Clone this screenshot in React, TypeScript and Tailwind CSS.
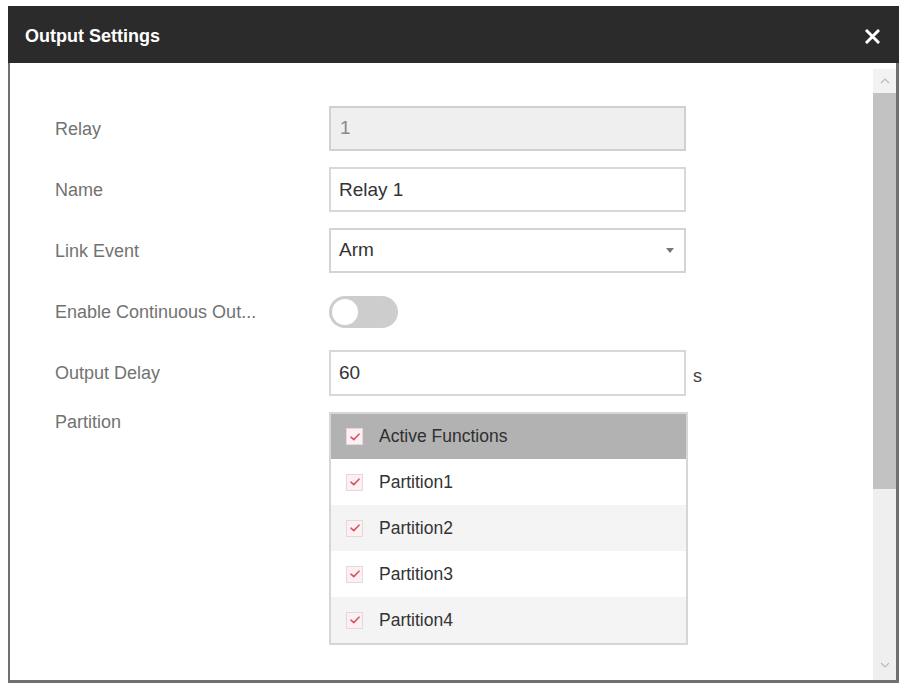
import React, { useState } from 'react';

// Output Settings dialog — relay config with partition list

const PARTITIONS = ['Partition1', 'Partition2', 'Partition3', 'Partition4'];

function Check() {
  return (
    <span className="w-[17px] h-[17px] border border-[#e6d8da] bg-[#fcf0f2] flex items-center justify-center shrink-0">
      <svg width="10" height="8" viewBox="0 0 10 8" fill="none">
        <path d="M1 4.2 L3.8 6.6 L9 1.2" stroke="#d9546a" strokeWidth="1.6" strokeLinecap="round" strokeLinejoin="round" />
      </svg>
    </span>
  );
}

function Row({ label, children, top }: { label: string; children: React.ReactNode; top?: boolean }) {
  return (
    <div className={`flex ${top ? 'items-start' : 'items-center min-h-[45px]'}`}>
      <div className="w-[274px] shrink-0 text-[18px] text-[#727272] leading-[20px]">{label}</div>
      {children}
    </div>
  );
}

export default function App() {
  const [on, setOn] = useState(false);
  const [name, setName] = useState('Relay 1');
  const [delay, setDelay] = useState('60');

  return (
    <div className="min-h-screen bg-white font-['Liberation_Sans',Arial,sans-serif]">
      <div className="ml-[8px] pt-[6px] w-[891px] flex flex-col">
        {/* Header */}
        <div className="h-[57px] bg-[#2b2b2b] flex items-center justify-between pl-[17px] pr-[19px] pt-[3px]">
          <span className="text-white font-bold text-[18px]">Output Settings</span>
          <svg width="15" height="15" viewBox="0 0 15 15">
            <path d="M2 2 L13 13 M13 2 L2 13" stroke="#fff" strokeWidth="3" strokeLinecap="square" />
          </svg>
        </div>

        {/* Body */}
        <div className="h-[620px] flex border-l-2 border-r-[3px] border-b-[3px] border-[#707070] bg-white">
          <div className="flex-1 pl-[45px] pt-[43px] flex flex-col gap-[16px]">
            <Row label="Relay">
              <div className="w-[357px] h-[45px] border-2 border-[#d0d0d0] bg-[#efefef] flex items-center px-[9px] text-[19px] text-[#8a8a8a]">1</div>
            </Row>
            <Row label="Name">
              <input
                value={name}
                onChange={e => setName(e.target.value)}
                className="w-[357px] h-[45px] border-2 border-[#d8d8d8] bg-white px-[8px] text-[19px] text-[#333] outline-none"
              />
            </Row>
            <Row label="Link Event">
              <div className="w-[357px] h-[45px] border-2 border-[#d4d4d4] bg-white flex items-center justify-between pl-[8px] pr-[10px] text-[19px] text-[#333]">
                <span>Arm</span>
                <svg width="8" height="5" viewBox="0 0 8 5"><path d="M0 0 H8 L4 5 Z" fill="#777" /></svg>
              </div>
            </Row>
            <Row label="Enable Continuous Out...">
              <button
                onClick={() => setOn(!on)}
                className={`w-[69px] h-[32px] rounded-full flex items-center px-[3px] ${on ? 'bg-[#d9546a] justify-end' : 'bg-[#cdcdcd] justify-start'}`}
              >
                <span className="w-[26px] h-[26px] rounded-full bg-white block" />
              </button>
            </Row>
            <Row label="Output Delay">
              <input
                value={delay}
                onChange={e => setDelay(e.target.value)}
                className="w-[357px] h-[46px] border-2 border-[#d8d8d8] bg-white px-[8px] text-[19px] text-[#333] outline-none"
              />
              <span className="ml-[7px] mt-[6px] text-[18px] text-[#444]">s</span>
            </Row>
            <Row label="Partition" top>
              <div className="w-[359px] border-2 border-[#d6d6d6] text-[17.5px] text-[#333]">
                <div className="h-[45px] bg-[#b2b2b2] flex items-center pl-[15px] gap-[16px]">
                  <Check />
                  <span className="text-[#2f2f2f]">Active Functions</span>
                </div>
                {PARTITIONS.map((p, i) => (
                  <div key={p} className={`h-[46px] flex items-center pl-[15px] gap-[16px] ${i % 2 ? 'bg-[#f4f4f4]' : 'bg-white'}`}>
                    <Check />
                    <span>{p}</span>
                  </div>
                ))}
              </div>
            </Row>
          </div>

          {/* Scrollbar */}
          <div className="w-[23px] pt-[6px] flex flex-col bg-white">
            <div className="h-[24px] bg-[#f2f2f2] flex items-center justify-center">
              <svg width="10" height="6" viewBox="0 0 10 6"><path d="M1 5 L5 1 L9 5" stroke="#bbb" strokeWidth="1.2" fill="none" /></svg>
            </div>
            <div className="h-[396px] bg-[#c2c2c2]" />
            <div className="flex-1 bg-[#efefef] flex items-end justify-center pb-[12px]">
              <svg width="10" height="6" viewBox="0 0 10 6"><path d="M1 1 L5 5 L9 1" stroke="#bbb" strokeWidth="1.2" fill="none" /></svg>
            </div>
          </div>
        </div>
      </div>
    </div>
  );
}
